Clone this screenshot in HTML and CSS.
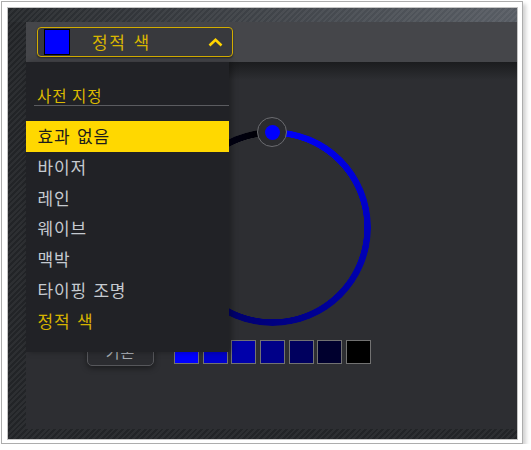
FILE: index.html
```html
<!DOCTYPE html>
<html>
<head>
    <title>조명 효과</title>
    <link rel="stylesheet" href="styles.css">
</head>
<body>
    <div class="frame">
        <div class="screen">
            <div class="panel">
                <div class="topbar">
                    <button class="effect-select">
                        <span class="current-swatch"></span>
                        <span class="effect-name">정적 색</span>
                        <svg class="chevron" width="15" height="9" viewBox="0 0 15 9">
                            <polyline points="1.5,7.5 7.5,1.8 13.5,7.5" fill="none" stroke="#ffd400" stroke-width="2.6"/>
                        </svg>
                    </button>
                </div>

                <div class="content">
                    <div class="dial">
                        <div class="ring"></div>
                        <div class="knob"><span class="knob-dot"></span></div>
                    </div>

                    <button class="reset">기본</button>

                    <div class="swatches">
                        <span class="swatch" style="background: #0000ff"></span>
                        <span class="swatch" style="background: #0000cc"></span>
                        <span class="swatch" style="background: #0000aa"></span>
                        <span class="swatch" style="background: #000088"></span>
                        <span class="swatch" style="background: #00005e"></span>
                        <span class="swatch" style="background: #00002e"></span>
                        <span class="swatch" style="background: #000000"></span>
                    </div>

                    <div class="menu">
                        <div class="menu-header">사전 지정</div>
                        <div class="menu-item active">효과 없음</div>
                        <div class="menu-item">바이저</div>
                        <div class="menu-item">레인</div>
                        <div class="menu-item">웨이브</div>
                        <div class="menu-item">맥박</div>
                        <div class="menu-item">타이핑 조명</div>
                        <div class="menu-item selected">정적 색</div>
                    </div>
                </div>
            </div>
        </div>
    </div>
</body>
</html>
```

FILE: styles.css
```css
body {
    margin: 0;
    background: #ffffff;
    font-family: "Noto Sans CJK KR", "Noto Sans", sans-serif;
}
.frame {
    box-sizing: border-box;
    width: 522px;
    height: 443px;
    margin: 1px 0 0 1px;
    padding: 5px 4px 3px 5px;
    border: 1px solid #adadad;
    background: #ffffff;
    box-shadow: 3px 3px 4px rgba(0, 0, 0, 0.18);
}
.screen {
    box-sizing: border-box;
    width: 511px;
    height: 433px;
    padding: 14px 0 10px 18px;
    border: 1px solid #c4c4c4;
    background:
        repeating-linear-gradient(135deg, rgba(255, 255, 255, 0.05) 0 2px, transparent 2px 4px),
        linear-gradient(to bottom, transparent 14px, #222427 14px),
        linear-gradient(to right, #25282b 0, #2e3135 15%, #585d64 100%);
}
.panel {
    display: flex;
    flex-direction: column;
    height: 100%;
}
.topbar {
    display: flex;
    align-items: center;
    height: 40px;
    padding-left: 10.5px;
    background: #45464a;
}
.effect-select {
    display: flex;
    align-items: center;
    box-sizing: border-box;
    width: 196px;
    height: 30px;
    padding: 0 8.5px 0 6.5px;
    border: 1px solid #d2ac00;
    border-radius: 4px;
    background: #38393d;
    box-shadow: 0 1px 2px rgba(0, 0, 0, 0.5);
    font-family: inherit;
    cursor: pointer;
}
.current-swatch {
    box-sizing: border-box;
    width: 26px;
    height: 26px;
    border: 1px solid #000000;
    background: #0000ff;
}
.effect-name {
    margin-left: 22px;
    color: #d8b600;
    font-size: 17px;
    line-height: 20px;
    letter-spacing: 1.5px;
    word-spacing: 2px;
}
.chevron {
    margin-left: auto;
}
.content {
    position: relative;
    flex: 1;
    display: grid;
    grid-template-columns: 67px 197px;
    align-content: start;
    column-gap: 20px;
    row-gap: 10px;
    padding: 67px 0 0 61px;
    background: linear-gradient(#1b1c1e, #2d2e32 18px);
}
.dial {
    position: relative;
    grid-column: 2;
    width: 197px;
    height: 197px;
}
.ring {
    width: 100%;
    height: 100%;
    border-radius: 50%;
    background: conic-gradient(#0000ff, #000000);
    -webkit-mask: radial-gradient(farthest-side, transparent calc(100% - 7px), #000 calc(100% - 6.5px));
    mask: radial-gradient(farthest-side, transparent calc(100% - 7px), #000 calc(100% - 6.5px));
}
.knob {
    position: absolute;
    left: 83px;
    top: -12px;
    display: flex;
    align-items: center;
    justify-content: center;
    box-sizing: border-box;
    width: 30px;
    height: 30px;
    border: 1px solid #6b6c70;
    border-radius: 50%;
    background: #2a2b2f;
}
.knob-dot {
    width: 15px;
    height: 15px;
    border-radius: 50%;
    background: #0000ff;
}
.reset {
    grid-column: 1;
    height: 30px;
    border: 1px solid #56575b;
    border-radius: 5px;
    background: #2b2c30;
    box-shadow: 0 2px 6px rgba(0, 0, 0, 0.45);
    color: #a7acb2;
    font-family: inherit;
    font-size: 15px;
    letter-spacing: 1px;
}
.swatches {
    grid-column: 2;
    display: flex;
    justify-content: space-between;
    margin-top: 4px;
    align-self: start;
}
.swatch {
    box-sizing: border-box;
    width: 25px;
    height: 24px;
    border: 1px solid #727272;
}
.menu {
    position: absolute;
    left: 0;
    top: 0;
    box-sizing: border-box;
    width: 203px;
    height: 290px;
    padding-top: 24px;
    background: #212226;
    box-shadow: 3px 0 6px rgba(0, 0, 0, 0.3);
}
.menu-header {
    margin: 0 0 15px 8px;
    padding: 0 0 1px 3px;
    border-bottom: 1px solid #5b5c60;
    color: #dcba00;
    font-size: 15.5px;
    line-height: 18px;
    letter-spacing: 1px;
}
.menu-item {
    height: 30.8px;
    padding-left: 11.5px;
    color: #c5cad0;
    font-size: 17px;
    line-height: 30px;
    letter-spacing: 0.8px;
    word-spacing: 2px;
}
.menu-item.active {
    background: #ffd800;
    color: #1c1c1c;
}
.menu-item.selected {
    color: #d6b300;
}
```
